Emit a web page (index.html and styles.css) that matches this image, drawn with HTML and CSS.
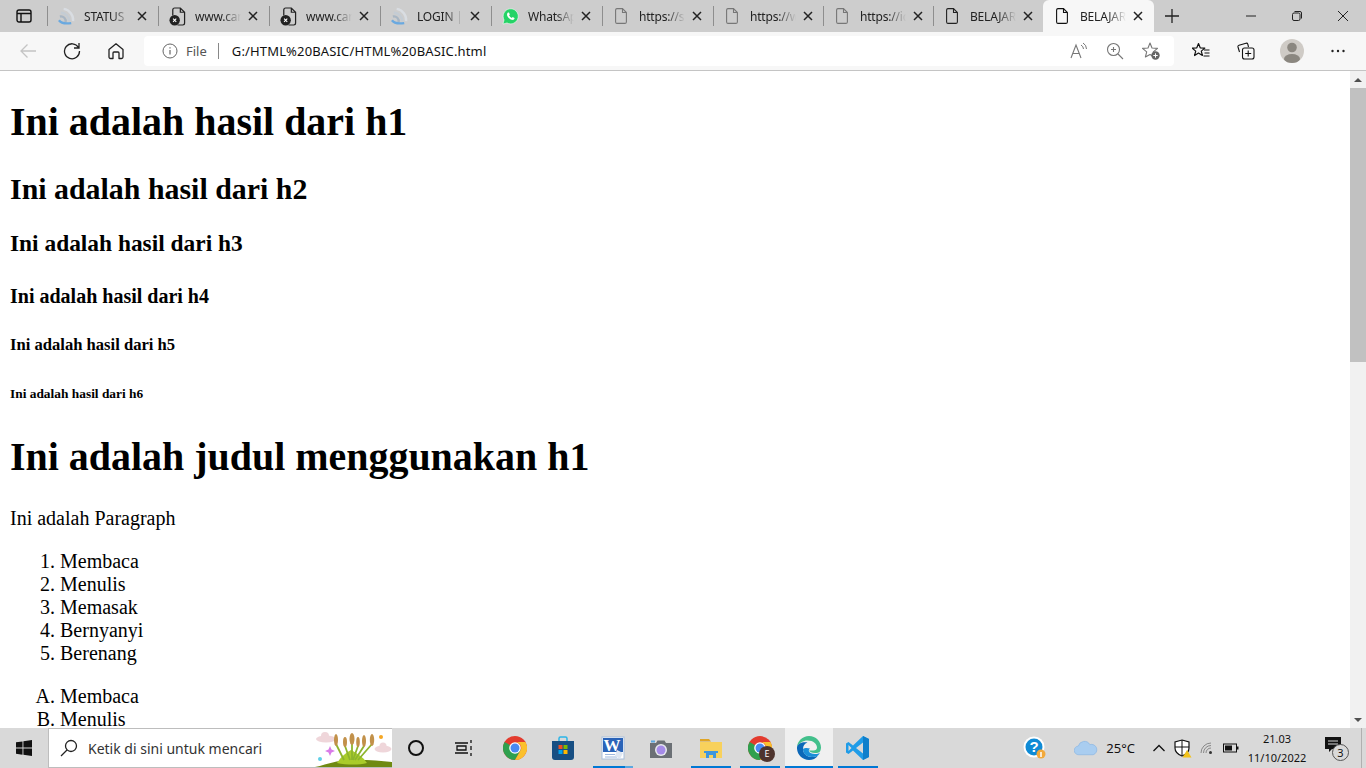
FILE: index.html
```html
<!DOCTYPE html>
<html lang="en">
<head>
    <meta charset="UTF-8">
    <meta name="viewport" content="width=device-width, initial-scale=1.0">
    <title>BELAJAR HTML</title>
    <link rel="stylesheet" href="styles.css">
</head>
<body>

    <svg class="defs" width="0" height="0">
        <defs>
            <symbol id="x" viewBox="0 0 12 12"><path d="M2 2l8 8M10 2l-8 8" fill="none" stroke="#222" stroke-width="1.500"/></symbol>
            <symbol id="doc" viewBox="0 0 12 16"><path d="M2 .6h5.500L11.400 4.500V14a1.500 1.500 0 0 1-1.500 1.400H2A1.500 1.500 0 0 1 .6 14V2A1.500 1.500 0 0 1 2 .6zM7.500.6v3.900h3.900" fill="none" stroke="currentColor" stroke-width="1.100"/></symbol>
            <symbol id="docx" viewBox="0 0 18 20"><path d="M6 1h6l4.500 4.500V17a2 2 0 0 1-2 2H9M12 1v4.500h4.500M4 9V3a2 2 0 0 1 2-2" fill="none" stroke="#222" stroke-width="1.300"/><circle cx="6" cy="14" r="5.500" fill="#222"/><path d="M4.300 12.300l3.400 3.400M7.700 12.300l-3.400 3.400" stroke="#fff" stroke-width="1.100"/></symbol>
            <symbol id="cast" viewBox="0 0 18 20"><path d="M6 2a12 12 0 0 1 10 13" fill="none" stroke="#d9dde2" stroke-width="2.500"/><path d="M3 6a9 9 0 0 1 9 9" fill="none" stroke="#c4ccd4" stroke-width="2.500"/><path d="M2 10a5 5 0 0 1 6 6" fill="none" stroke="#a8b6c4" stroke-width="2.500"/><path d="M1 14c2 3 6 4 13 3" fill="none" stroke="#6aa9e0" stroke-width="2.500"/></symbol>
            <symbol id="chrome" viewBox="0 0 24 24"><circle cx="12" cy="12" r="12" fill="#e33b2e"/><path d="M12 12L1.600 6A12 12 0 0 0 12 24l6-10.400z" fill="#2fa04e"/><path d="M12 6h10.400A12 12 0 0 1 12 24l6-10.400A6 6 0 0 0 12 6z" fill="#fbc02d"/><circle cx="12" cy="12" r="5.800" fill="#fff"/><circle cx="12" cy="12" r="4.500" fill="#4a89f3"/></symbol>
        </defs>
    </svg>

    <header class="tabstrip">
        <div class="tabview">
            <svg width="16" height="16" viewBox="0 0 16 16"><rect x="1" y="2" width="14" height="12" rx="2" fill="none" stroke="#111" stroke-width="1.400"/><path d="M1 5.500h14M5 5.500V14" stroke="#111" stroke-width="1.400" fill="none"/></svg>
        </div>
        <div class="tab"><svg class="favicon" viewBox="0 0 18 20"><use href="#cast"/></svg><span class="tab-title">STATUS</span><svg class="tab-close"><use href="#x"/></svg></div>
        <div class="tab"><svg class="favicon" viewBox="0 0 18 20"><use href="#docx"/></svg><span class="tab-title">www.canva.com</span><svg class="tab-close"><use href="#x"/></svg></div>
        <div class="tab"><svg class="favicon" viewBox="0 0 18 20"><use href="#docx"/></svg><span class="tab-title">www.canva.com</span><svg class="tab-close"><use href="#x"/></svg></div>
        <div class="tab"><svg class="favicon" viewBox="0 0 18 20"><use href="#cast"/></svg><span class="tab-title">LOGIN | Portal</span><svg class="tab-close"><use href="#x"/></svg></div>
        <div class="tab">
            <svg class="favicon" viewBox="0 0 18 18"><path d="M1 17l1.200-4.300A8 8 0 1 1 5.300 15.800z" fill="#25d366" stroke="#fff" stroke-width=".6"/><path d="M6.300 4.800c-.6.500-1.200 1.400-.9 2.800.4 1.700 2.700 4.200 4.900 4.900 1.300.4 2.200-.1 2.700-.8.300-.5.300-1 .2-1.200l-1.900-.9-.9 1c-1-.3-2.400-1.600-2.900-2.800l.8-.9-.8-2c-.3-.2-1.600-.3-2.200-.1z" fill="#fff"/></svg>
            <span class="tab-title">WhatsApp</span><svg class="tab-close"><use href="#x"/></svg>
        </div>
        <div class="tab tab-grey"><svg class="favicon-doc"><use href="#doc"/></svg><span class="tab-title">https://sites</span><svg class="tab-close"><use href="#x"/></svg></div>
        <div class="tab tab-grey tab-narrow"><svg class="favicon-doc"><use href="#doc"/></svg><span class="tab-title">https://web</span><svg class="tab-close"><use href="#x"/></svg></div>
        <div class="tab tab-grey tab-narrow"><svg class="favicon-doc"><use href="#doc"/></svg><span class="tab-title">https://id</span><svg class="tab-close"><use href="#x"/></svg></div>
        <div class="tab tab-narrow"><svg class="favicon-doc"><use href="#doc"/></svg><span class="tab-title">BELAJAR HTML</span><svg class="tab-close"><use href="#x"/></svg></div>
        <div class="tab tab-active"><svg class="favicon-doc"><use href="#doc"/></svg><span class="tab-title">BELAJAR HTML</span><svg class="tab-close"><use href="#x"/></svg></div>
        <div class="newtab">
            <svg width="16" height="16" viewBox="0 0 16 16"><path d="M8 1v14M1 8h14" stroke="#222" stroke-width="1.300"/></svg>
        </div>
        <div class="winctl">
            <div class="winbtn"><svg width="12" height="12" viewBox="0 0 12 12"><path d="M1 6h10" stroke="#222"/></svg></div>
            <div class="winbtn"><svg width="12" height="12" viewBox="0 0 12 12"><rect x="1.500" y="3" width="7.500" height="7.500" rx="1.500" fill="none" stroke="#222"/><path d="M3.500 1.500h5.500a1.500 1.500 0 0 1 1.500 1.500v5.500" fill="none" stroke="#222"/></svg></div>
            <div class="winbtn"><svg width="12" height="12" viewBox="0 0 12 12"><path d="M1 1l10 10M11 1L1 11" stroke="#222"/></svg></div>
        </div>
    </header>

    <nav class="toolbar">
        <div class="navbtn"><svg width="18" height="18" viewBox="0 0 18 18"><path d="M17 9H2M8.500 2.500L2 9l6.500 6.500" fill="none" stroke="#c4c4c4" stroke-width="1.300"/></svg></div>
        <div class="navbtn"><svg width="18" height="18" viewBox="0 0 18 18"><path d="M15.500 5.500A7.500 7.500 0 1 0 16.500 9M16 1v5h-5" fill="none" stroke="#222" stroke-width="1.300"/></svg></div>
        <div class="navbtn"><svg width="18" height="18" viewBox="0 0 18 18"><path d="M2 7.500L9 1.800l7 5.700V15a1.500 1.500 0 0 1-1.500 1.500H12V11a1 1 0 0 0-1-1H7a1 1 0 0 0-1 1v5.500H3.500A1.500 1.500 0 0 1 2 15z" fill="none" stroke="#222" stroke-width="1.300" stroke-linejoin="round"/></svg></div>
        <div class="addressbar">
            <svg class="info" width="16" height="16" viewBox="0 0 16 16"><circle cx="8" cy="8" r="7" fill="none" stroke="#666"/><path d="M8 7v4.500M8 4.200v1.300" stroke="#666" stroke-width="1.200"/></svg>
            <span class="scheme">File</span>
            <span class="url">G:/HTML%20BASIC/HTML%20BASIC.html</span>
            <div class="addr-icons">
                <svg width="18" height="18" viewBox="0 0 18 18"><path d="M1 16L6 3l5 13M3 11.500h6" fill="none" stroke="#777" stroke-width="1.100"/><path d="M11 3a5 5 0 0 1 2.500 4M13 1a7 7 0 0 1 3.500 6" fill="none" stroke="#777"/></svg>
                <svg width="18" height="18" viewBox="0 0 18 18"><circle cx="7.500" cy="7.500" r="6" fill="none" stroke="#777" stroke-width="1.100"/><path d="M12 12l5 5M7.500 5v5M5 7.500h5" stroke="#777" stroke-width="1.100"/></svg>
                <svg width="18" height="18" viewBox="0 0 18 18"><path d="M8 1l2 5 5.500.4-4.200 3.500 1.300 5.100L8 12.500 3.400 15l1.300-5.100L.5 6.400 6 6z" fill="none" stroke="#777" stroke-width="1.100" stroke-linejoin="round"/><circle cx="13.500" cy="13.500" r="4.200" fill="#666"/><path d="M13.500 11.300v4.400M11.300 13.500h4.400" stroke="#fff"/></svg>
            </div>
        </div>
        <div class="tools">
            <div class="tool"><svg width="18" height="18" viewBox="0 0 18 18"><path d="M6.500 1.500l1.700 4.300 4.600.3-3.500 3 1.100 4.400-3.900-2.400-3.900 2.400 1.100-4.400-3.500-3 4.600-.3z" fill="none" stroke="#111" stroke-width="1.200" stroke-linejoin="round"/><path d="M12 8h5.500M12.500 11h5M11.500 14h6" stroke="#111" stroke-width="1.100"/></svg></div>
            <div class="tool"><svg width="18" height="18" viewBox="0 0 18 18"><path d="M2.500 10L1 5a1.500 1.500 0 0 1 1-1.800l7-2a1.500 1.500 0 0 1 1.800 1L11.500 5" fill="none" stroke="#111" stroke-width="1.100"/><rect x="5.500" y="6" width="11.500" height="11" rx="2" fill="#f7f7f7" stroke="#111" stroke-width="1.100"/><path d="M11.200 8.500v6M8.200 11.500h6" stroke="#111" stroke-width="1.100"/></svg></div>
            <div class="tool"><div class="avatar"><svg width="24" height="24" viewBox="0 0 24 24"><circle cx="12" cy="8.500" r="4.800" fill="#8b8780"/><ellipse cx="12" cy="20" rx="8" ry="5" fill="#8b8780"/></svg></div></div>
            <div class="tool"><svg width="16" height="16" viewBox="0 0 16 16"><circle cx="2.500" cy="8" r="1.200" fill="#222"/><circle cx="8" cy="8" r="1.200" fill="#222"/><circle cx="13.500" cy="8" r="1.200" fill="#222"/></svg></div>
        </div>
    </nav>

    <div class="view">
        <main class="page">
            <h1>Ini adalah hasil dari h1</h1>
            <h2>Ini adalah hasil dari h2</h2>
            <h3>Ini adalah hasil dari h3</h3>
            <h4>Ini adalah hasil dari h4</h4>
            <h5>Ini adalah hasil dari h5</h5>
            <h6>Ini adalah hasil dari h6</h6>
            <h1>Ini adalah judul menggunakan h1</h1>
            <p>Ini adalah Paragraph</p>
            <ol>
                <li>Membaca</li>
                <li>Menulis</li>
                <li>Memasak</li>
                <li>Bernyanyi</li>
                <li>Berenang</li>
            </ol>
            <ol type="A">
                <li>Membaca</li>
                <li>Menulis</li>
                <li>Memasak</li>
            </ol>
        </main>
        <div class="scrollbar">
            <div class="arrow arrow-up"></div>
            <div class="thumb"></div>
            <div class="arrow arrow-down"></div>
        </div>
    </div>

    <footer class="taskbar">
        <div class="start">
            <svg width="16" height="16" viewBox="0 0 16 16"><path d="M0 2.300l6.500-.9v6.200H0zM7.400 1.300L16 0v7.600H7.400zM0 8.500h6.500v6.200L0 13.700zM7.400 8.500H16V16l-8.600-1.300z" fill="#111"/></svg>
        </div>
        <div class="search">
            <svg width="18" height="18" viewBox="0 0 18 18"><circle cx="11" cy="7" r="5.500" fill="none" stroke="#222" stroke-width="1.300"/><path d="M7 11l-6 6" stroke="#222" stroke-width="1.300"/></svg>
            <span class="search-text">Ketik di sini untuk mencari</span>
            <svg class="search-art" width="79" height="38" viewBox="0 0 79 38">
                <ellipse cx="13" cy="10" rx="10" ry="3.500" fill="#efd6da"/><circle cx="12" cy="7" r="4" fill="#efd6da"/>
                <ellipse cx="70" cy="20" rx="8.500" ry="3.500" fill="#efd6da"/><circle cx="70" cy="17" r="3.500" fill="#efd6da"/>
                <path d="M17 17l1.500 3.500 3.500 1.500-3.500 1.500L17 27l-1.500-3.500-3.500-1.500 3.500-1.500z" fill="#d97ce8"/>
                <circle cx="7" cy="30" r="2" fill="#5fd0e8"/><circle cx="68" cy="8" r="2" fill="#f5a623"/>
                <path d="M2 38c10-2 20-6 32-7 18-1 32 1 45 2v5z" fill="#6f8a12"/>
                <path d="M24 34c4-6 8-10 14-13 6 3 12 7 16 13-8 2-20 2-30 0z" fill="#a9cc2a"/>
                <path d="M23 15l8 16M32 17l5 14M39 15l0 16M45 17l-5 14M51 17l-9 14M59 15l-14 16" stroke="#8db52c" stroke-width="1.800" fill="none"/>
                <g fill="#c2914a"><ellipse cx="23" cy="11" rx="2" ry="6"/><ellipse cx="32" cy="13" rx="2" ry="5"/><ellipse cx="39" cy="10" rx="2.500" ry="6"/><ellipse cx="45" cy="13" rx="1.800" ry="5"/><ellipse cx="51" cy="12" rx="2" ry="6"/><ellipse cx="59" cy="11" rx="2.200" ry="6"/></g>
            </svg>
        </div>
        <div class="task task-first"><svg width="20" height="20" viewBox="0 0 20 20"><circle cx="10" cy="10" r="7" fill="none" stroke="#111" stroke-width="2"/></svg></div>
        <div class="task"><svg width="20" height="20" viewBox="0 0 20 20"><path d="M1 5h13M1 15h13M3 8h9v4H3zM17 2v3M17 8v4M17 15v3" fill="none" stroke="#111" stroke-width="1.300"/></svg></div>
        <div class="task task-gap"><svg width="24" height="24"><use href="#chrome"/></svg></div>
        <div class="task">
            <svg width="24" height="24" viewBox="0 0 24 24"><path d="M8 6V2.500A1.500 1.500 0 0 1 9.500 1h5A1.500 1.500 0 0 1 16 2.500V6" fill="none" stroke="#2bb5e8" stroke-width="1.500"/><path d="M1 5h22v16a3 3 0 0 1-3 3H4a3 3 0 0 1-3-3z" fill="#174f83"/><rect x="7.500" y="9" width="4" height="4" fill="#f25022"/><rect x="12.500" y="9" width="4" height="4" fill="#7fba00"/><rect x="7.500" y="14" width="4" height="4" fill="#00a4ef"/><rect x="12.500" y="14" width="4" height="4" fill="#ffb900"/></svg>
        </div>
        <div class="task task-pair task-open task-word">
            <svg width="24" height="24" viewBox="0 0 24 24"><rect x="1" y="1" width="22" height="22" fill="#fff" stroke="#a9bfdc"/><rect x="2" y="2" width="20" height="14" fill="#2a63b8"/><text class="word-w" x="11" y="15" text-anchor="middle">W</text><path d="M4 18.500h10M4 21h12" stroke="#9db7dd"/><path d="M16 14l6 3-3 6-5-3z" fill="#dfe7f2"/></svg>
        </div>
        <div class="task">
            <svg width="24" height="24" viewBox="0 0 24 24"><path d="M1 7h6l1.500-2.500h7L17 7h6v15H1z" fill="#6b7075"/><rect x="2" y="4.500" width="4" height="2" fill="#5aa7e0"/><circle cx="12" cy="14" r="6" fill="#e7e9ee"/><circle cx="12" cy="14" r="4.500" fill="#a58be8"/></svg>
        </div>
        <div class="task task-pair task-open">
            <svg width="24" height="24" viewBox="0 0 24 24"><path d="M1 3h9l2 2.500H1z" fill="#e0a526"/><path d="M1 6h22v16H1z" fill="#f8d15c"/><path d="M7 17h10v5h-3v-3h-4v3H7z" fill="#3f96dd"/><path d="M5 15h14v2H5z" fill="#3f96dd"/></svg>
        </div>
        <div class="task task-tight task-open">
            <svg width="24" height="24"><use href="#chrome"/></svg>
            <span class="profile-e">E</span>
        </div>
        <div class="task task-tight task-open task-edge">
            <svg width="24" height="24" viewBox="0 0 24 24"><path d="M12 0C5.500 0 .5 5 0 11c2-4 6-6.500 10.500-6.500 6 0 9.500 3.500 9.500 7 0 2-1.500 3-3.500 3H12c.5 1.500 3 2.500 6 2.500 2 0 4-.5 5-1.500.7-1.500 1-3 1-4C24 5.500 19 0 12 0z" fill="#43c08c"/><path d="M0 11c-.5 7 5 13 12 13 3.500 0 7-1.500 9-4.500-2 1-4 1.500-6 1.500-5 0-9-3.500-9-8 0-3 1.500-5.500 4.500-6.500C5.500 5.500 1 7.500 0 11z" fill="#0c68b8"/><path d="M6 13c0 5 4 8 9 8 2 0 4-.5 6-1.500 1-1 1.500-2 2-3-1 1-3 1.500-5 1.500-3 0-5.500-1-6-2.500-.5-1 0-2 1-3-3-1-5.500-.5-7 .5z" fill="#1b8fd8"/></svg>
        </div>
        <div class="task task-tight task-open">
            <svg width="24" height="24" viewBox="0 0 24 24"><path d="M17 0l6 3v18l-6 3-10-9.500L2.500 18 0 16.500V7.500L2.500 6 7 9.500z" fill="#1f9ce8"/><path d="M17 6.500L10 12l7 5.500zM2.500 9v6L5.500 12z" fill="#d9d9d9"/><path d="M17 0l6 3v18l-6 3z" fill="#0f7fcb"/></svg>
        </div>

        <div class="tray">
            <div class="tray-help">
                <svg width="24" height="24" viewBox="0 0 24 24"><circle cx="11" cy="11" r="10.500" fill="#fff"/><circle cx="11" cy="11" r="8.500" fill="#0f8bd6"/><text class="help-q" x="11" y="16" text-anchor="middle">?</text><circle cx="18" cy="18" r="4.500" fill="#f2a93b"/><path d="M18 16v5" stroke="#fff" stroke-width="1.500"/></svg>
            </div>
            <div class="weather">
                <svg width="24" height="16" viewBox="0 0 25 16"><path d="M5 15a4.500 4.500 0 0 1-.5-9A6.500 6.500 0 0 1 16.500 4.500 5.500 5.500 0 0 1 20 15z" fill="#a9cdf0" stroke="#8eb9e4" stroke-width=".8"/></svg>
                <span>25°C</span>
            </div>
            <div class="tray-icon"><svg width="14" height="10" viewBox="0 0 14 10"><path d="M1.500 8L7 2.500 12.500 8" fill="none" stroke="#111" stroke-width="1.300"/></svg></div>
            <div class="tray-icon">
                <svg width="18" height="19" viewBox="0 0 18 19"><path d="M8 1l7 2v6c0 4-3 6.500-7 8-4-1.500-7-4-7-8V3z" fill="#fff" stroke="#111" stroke-width="1.200"/><path d="M8 1v16M1 8h14" stroke="#111"/><path d="M13 11l4.500 7.500h-9z" fill="#f2c21a"/></svg>
            </div>
            <div class="tray-icon">
                <svg width="14" height="14" viewBox="0 0 14 14"><path d="M1 12a10 10 0 0 1 10-10M3.500 12A7.500 7.500 0 0 1 11 4.500M6 12a5 5 0 0 1 5-5" fill="none" stroke="#888"/><circle cx="10.500" cy="11.500" r="1.500" fill="#333"/></svg>
            </div>
            <div class="tray-icon">
                <svg width="16" height="10" viewBox="0 0 16 10"><rect x=".5" y="1" width="13" height="8" fill="none" stroke="#111"/><rect x="2" y="2.500" width="7" height="5" fill="#111"/><rect x="14" y="3.500" width="1.500" height="3" fill="#111"/></svg>
            </div>
            <div class="clock"><span>21.03</span><span>11/10/2022</span></div>
            <div class="notif">
                <svg width="16" height="16" viewBox="0 0 16 16"><path d="M0 0h16v12H7l-3 3v-3H0z" fill="#111"/><path d="M3 4h10M3 7h10" stroke="#d9d9d9"/></svg>
                <span class="notif-count">3</span>
            </div>
            <div class="show-desktop"></div>
        </div>
    </footer>

</body>
</html>
```

FILE: styles.css
```css
* {
    box-sizing: border-box;
}

body {
    margin: 0;
    height: 100vh;
    display: flex;
    flex-direction: column;
    overflow: hidden;
    background: #fff;
    font-family: 'Noto Sans', sans-serif;
    color: #222;
}

.defs {
    position: absolute;
}

/* tab strip */
.tabstrip {
    height: 32px;
    flex: none;
    display: flex;
    background: #cdcdcd;
}

.tabview {
    width: 47px;
    display: flex;
    align-items: center;
    justify-content: center;
}

.tab {
    width: 111px;
    height: 32px;
    flex: none;
    display: flex;
    align-items: center;
    padding-left: 11px;
    position: relative;
    color: #222;
    font-size: 12px;
}

.tab::before {
    content: "";
    position: absolute;
    left: 0;
    top: 6px;
    height: 20px;
    width: 1px;
    background: #8e8e8e;
}

.tab-narrow {
    width: 110px;
}

.tab-grey {
    color: #777;
}

.tab-active {
    background: #f7f7f7;
    border-radius: 6px 6px 0 0;
    color: #111;
}

.tab-active::before {
    display: none;
}

.favicon {
    width: 17px;
    height: 19px;
    flex: none;
}

.favicon-doc {
    width: 12px;
    height: 16px;
    margin: 0 3px 0 2px;
    flex: none;
}

.tab-title {
    width: 46px;
    margin-left: 9px;
    white-space: nowrap;
    overflow: hidden;
    color: #222;
    letter-spacing: -0.2px;
    -webkit-mask-image: linear-gradient(90deg, #000 60%, transparent 100%);
    mask-image: linear-gradient(90deg, #000 60%, transparent 100%);
}

.tab-close {
    width: 12px;
    height: 12px;
    margin-left: 6px;
    flex: none;
}

.newtab {
    width: 36px;
    display: flex;
    align-items: center;
    justify-content: center;
}

.winctl {
    margin-left: auto;
    display: flex;
}

.winbtn {
    width: 46px;
    display: flex;
    align-items: center;
    justify-content: center;
}

/* toolbar */
.toolbar {
    height: 39px;
    flex: none;
    display: flex;
    align-items: center;
    padding-left: 6px;
    background: #f7f7f7;
    border-bottom: 1px solid #c4c4c4;
}

.navbtn {
    width: 44px;
    display: flex;
    justify-content: center;
}

.addressbar {
    width: 1030px;
    height: 30px;
    margin-left: 6px;
    display: flex;
    align-items: center;
    background: #fff;
    border-radius: 4px;
    padding-left: 18px;
    font-size: 13px;
}

.scheme {
    margin-left: 8px;
    padding-right: 11px;
    border-right: 1px solid #888;
    color: #555;
    line-height: 16px;
}

.url {
    margin-left: 13px;
    color: #111;
    letter-spacing: 0.15px;
}

.addr-icons {
    margin-left: auto;
    margin-right: 14px;
    display: flex;
    gap: 18px;
}

.tools {
    display: flex;
    align-items: center;
    margin-left: 4px;
}

.tool {
    width: 45.6px;
    display: flex;
    justify-content: center;
}

.avatar {
    width: 24px;
    height: 24px;
    border-radius: 50%;
    background: #cfcbc6;
    overflow: hidden;
}

.avatar svg {
    display: block;
}

/* page */
.view {
    flex: 1;
    min-height: 0;
    display: flex;
}

.page {
    flex: 1;
    overflow: hidden;
    padding: 0 10px;
    font-family: 'Liberation Serif', serif;
    font-size: 20px;
    color: #000;
}

.page h1 {
    font-size: 39.95px;
    margin: 26.8px 0;
}

.page h2 {
    font-size: 29.9px;
    margin: 24.9px 0;
}

.page h3 {
    font-size: 23.4px;
    margin: 23.4px 0;
}

.page h4 {
    font-size: 20px;
    margin: 27.1px 0 26.1px;
}

.page h5 {
    font-size: 16.6px;
    margin: 27.7px 0;
}

.page h6 {
    font-size: 13.4px;
    margin: 31.2px 0 30.7px;
}

.page p,
.page ol {
    margin: 20px 0;
}

.page ol {
    padding-left: 50px;
}

.scrollbar {
    width: 16px;
    flex: none;
    display: flex;
    flex-direction: column;
    background: #f1f1f1;
}

.arrow {
    height: 17px;
    flex: none;
    display: flex;
    align-items: center;
    justify-content: center;
}

.arrow::after {
    content: "";
    border-left: 4px solid transparent;
    border-right: 4px solid transparent;
}

.arrow-up::after {
    border-bottom: 4px solid #505050;
}

.arrow-down {
    margin-top: auto;
}

.arrow-down::after {
    border-top: 4px solid #505050;
}

.thumb {
    height: 274px;
    background: #c1c1c1;
}

/* taskbar */
.taskbar {
    height: 40px;
    flex: none;
    display: flex;
    align-items: stretch;
    background: #d9d9d9;
}

.start {
    width: 48px;
    display: flex;
    align-items: center;
    justify-content: center;
}

.search {
    width: 344px;
    display: flex;
    align-items: center;
    background: #fff;
    border: 1px solid #bdbdbd;
    border-right: none;
    padding-left: 11px;
    position: relative;
    font-size: 14px;
    color: #333;
}

.search-text {
    margin-left: 10px;
}

.search-art {
    margin-left: auto;
    flex: none;
}

.task {
    width: 48px;
    flex: none;
    display: flex;
    align-items: center;
    justify-content: center;
    position: relative;
}

.task-gap {
    margin-left: 3px;
}

.task-pair {
    margin-left: 2px;
}

.task-tight {
    margin-left: 1px;
}

.task-open::after {
    content: "";
    position: absolute;
    left: 4px;
    right: 4px;
    bottom: 0;
    height: 2px;
    background: #0078d4;
}

.task-word::after {
    background: linear-gradient(90deg, #0078d4 80%, #5ba8e0 80%);
}

.task-edge {
    background: #f0f0f0;
}

.task-edge::after {
    left: 0;
    right: 0;
}

.word-w {
    font-family: 'Liberation Serif', serif;
    font-weight: bold;
    font-size: 17px;
    fill: #fff;
}

.profile-e {
    position: absolute;
    right: 9px;
    bottom: 6px;
    width: 16px;
    height: 16px;
    border-radius: 50%;
    background: #4e342e;
    color: #fff;
    font-size: 9px;
    line-height: 16px;
    text-align: center;
}

.tray {
    margin-left: auto;
    display: flex;
    align-items: center;
    font-size: 11px;
    color: #111;
}

.tray-help {
    width: 24px;
    height: 24px;
    margin-right: 27px;
}

.help-q {
    font-family: 'Liberation Sans', sans-serif;
    font-weight: bold;
    font-size: 15px;
    fill: #fff;
}

.weather {
    display: flex;
    align-items: center;
    gap: 8px;
    margin-right: 12px;
    font-size: 13px;
}

.tray-icon {
    width: 24px;
    display: flex;
    justify-content: center;
}

.clock {
    width: 64px;
    margin-left: 2px;
    display: flex;
    flex-direction: column;
    align-items: center;
    line-height: 19px;
}

.notif {
    width: 41px;
    margin-left: 11px;
    height: 22px;
    padding-left: 5px;
    position: relative;
}

.notif-count {
    position: absolute;
    left: 12px;
    top: 7px;
    width: 17px;
    height: 17px;
    border: 1px solid #555;
    border-radius: 50%;
    background: #d9d9d9;
    text-align: center;
    line-height: 15px;
    font-size: 11px;
}

.show-desktop {
    width: 5px;
    height: 40px;
    border-left: 1px solid #b0b0b0;
}
```
